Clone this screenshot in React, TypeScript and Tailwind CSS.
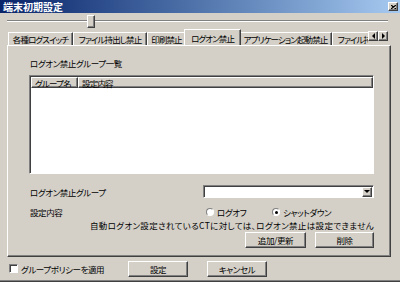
import React from "react";

const raised =
  "border border-t-white border-l-white border-r-[#404040] border-b-[#404040] shadow-[inset_-1px_-1px_0_#808080]";
const sunken =
  "border border-t-[#808080] border-l-[#808080] border-r-white border-b-white shadow-[inset_1px_1px_0_#404040]";

function Tri({ dir }: { dir: "down" | "left" | "right" }) {
  const pts =
    dir === "down" ? "0,0 6,0 3,3" : dir === "left" ? "3,0 3,6 0,3" : "0,0 0,6 3,3";
  const w = dir === "down" ? 6 : 3;
  const h = dir === "down" ? 3 : 6;
  return (
    <svg width={w} height={h} viewBox={`0 0 ${w} ${h}`}>
      <polygon points={pts} fill="#000" />
    </svg>
  );
}

function Btn({ children, w }: { children: React.ReactNode; w: string }) {
  return (
    <div className={`${raised} ${w} h-[16px] bg-[#d4d0c8] flex items-center justify-center whitespace-nowrap`}>
      {children}
    </div>
  );
}

function Radio({ checked, label }: { checked?: boolean; label: string }) {
  return (
    <div className="flex items-center gap-[3px]">
      <span className="w-[8px] h-[8px] rounded-full bg-white border border-t-[#808080] border-l-[#808080] border-r-white border-b-white flex items-center justify-center">
        {checked && <span className="w-[3px] h-[3px] rounded-full bg-black" />}
      </span>
      <span>{label}</span>
    </div>
  );
}

const tabs = [
  { label: "各種ログスイッチ", w: "w-[65px]" },
  { label: "ファイル持出し禁止", w: "w-[74px]" },
  { label: "印刷禁止", w: "w-[39px]" },
  { label: "ログオン禁止", w: "w-[57px]", active: true },
  { label: "アプリケーション起動禁止", w: "w-[93px]" },
  { label: "ファイル持出し禁止", w: "w-[74px]" },
];

export default function App() {
  return (
    <div className="w-[400px] h-[282px] bg-[#d4d0c8] overflow-hidden flex flex-col font-['Noto_Sans_CJK_JP',sans-serif] [font-feature-settings:'palt'] text-[8.5px] leading-[10px] tracking-[-0.4px] text-black">
      {/* title bar */}
      <div className="h-[13px] bg-gradient-to-r from-[#0a246a] to-[#a6caf0] flex items-center justify-between">
        <span className="pl-[3px] text-white font-bold text-[10px] leading-[13px] tracking-normal">端末初期設定</span>
        <div className={`${raised} w-[10px] h-[9px] bg-[#d4d0c8] mr-[2px] flex items-center justify-center`}>
          <svg width="5" height="4" viewBox="0 0 5 4">
            <path d="M0 0 L5 4 M5 0 L0 4" stroke="#000" strokeWidth="1.2" />
          </svg>
        </div>
      </div>

      {/* slider */}
      <div className="h-[16px] relative">
        <div className="ml-[7px] w-[381px] mt-[7px] h-[2px] border-t border-t-[#808080] border-b border-b-white" />
        <div className={`${raised} absolute left-[87px] top-[2px] w-[8px] h-[13px] bg-[#d4d0c8]`} />
      </div>

      {/* tabs */}
      <div className="h-[16px] flex items-end pl-[8px]">
        <div className="flex items-end w-[360px] overflow-hidden h-[16px] tracking-[-0.9px]">
          {tabs.map((t, i) =>
            t.active ? (
              <div
                key={i}
                className={`${t.w} shrink-0 -mx-[2px] relative z-10 bg-[#d4d0c8] border-t border-l border-t-white border-l-white border-r border-r-[#404040] shadow-[inset_-1px_0_0_#808080] flex items-center justify-center whitespace-nowrap -mb-[1px] h-[17px] pb-[1px]`}
              >
                {t.label}
              </div>
            ) : (
              <div
                key={i}
                className={`${t.w} shrink-0 h-[13px] bg-[#d4d0c8] border-t border-l border-t-white border-l-white border-r border-r-[#404040] shadow-[inset_-1px_0_0_#808080] flex items-center justify-center whitespace-nowrap overflow-hidden`}
              >
                {t.label}
              </div>
            )
          )}
        </div>
        <div className="flex mb-[4px]">
          <div className={`${raised} w-[10px] h-[10px] bg-[#d4d0c8] flex items-center justify-center`}>
            <Tri dir="left" />
          </div>
          <div className={`${raised} w-[10px] h-[10px] bg-[#d4d0c8] flex items-center justify-center`}>
            <Tri dir="right" />
          </div>
        </div>
      </div>

      {/* panel */}
      <div className="ml-[7px] mr-[9px] h-[212px] border border-t-white border-l-white border-r-[#404040] border-b-[#404040] shadow-[inset_-1px_-1px_0_#808080] pl-[22px] pr-[16px] flex flex-col">
        <div className="mt-[12px] whitespace-nowrap">ログオン禁止グループ一覧</div>
        <div className={`${sunken} mt-[7px] -ml-[1px] w-[345px] h-[99px] bg-white flex flex-col`}>
          <div className="flex h-[11px] ml-[1px] mt-[1px] whitespace-nowrap tracking-[-0.8px]">
            <div className={`${raised} w-[47px] h-[11px] bg-[#d4d0c8] pl-[3px] flex items-center overflow-hidden`}>グループ名</div>
            <div className={`${raised} flex-1 h-[11px] bg-[#d4d0c8] pl-[3px] flex items-center`}>設定内容</div>
          </div>
        </div>

        <div className="mt-[11px] flex items-center justify-between">
          <span>ログオン禁止グループ</span>
          <div className={`${sunken} w-[171px] h-[13px] bg-white flex justify-end items-center pr-[1px]`}>
            <div className={`${raised} w-[10px] h-[10px] bg-[#d4d0c8] flex items-center justify-center`}>
              <Tri dir="down" />
            </div>
          </div>
        </div>

        <div className="mt-[9px] flex items-center">
          <span className="w-[176px]">設定内容</span>
          <div className="w-[66px]">
            <Radio label="ログオフ" />
          </div>
          <Radio checked label="シャットダウン" />
        </div>

        <div className="mt-[3px] text-right whitespace-nowrap tracking-[0.35px]">
          自動ログオン設定されているCTに対しては、ログオン禁止は設定できません
        </div>

        <div className="mt-[2px] flex justify-end gap-[9px]">
          <Btn w="w-[61px]">追加/更新</Btn>
          <Btn w="w-[59px]">削除</Btn>
        </div>
      </div>

      {/* bottom row */}
      <div className="flex items-center h-[23px] pl-[9px]">
        <span className={`${sunken} w-[9px] h-[9px] bg-white shrink-0`} />
        <span className="ml-[3px] w-[107px] whitespace-nowrap">グループポリシーを適用</span>
        <Btn w="w-[60px]">設定</Btn>
        <div className="w-[19px]" />
        <Btn w="w-[60px]">キャンセル</Btn>
      </div>
      <div className="h-px bg-[#808080]" />
      <div className="h-px bg-[#404040]" />
    </div>
  );
}
